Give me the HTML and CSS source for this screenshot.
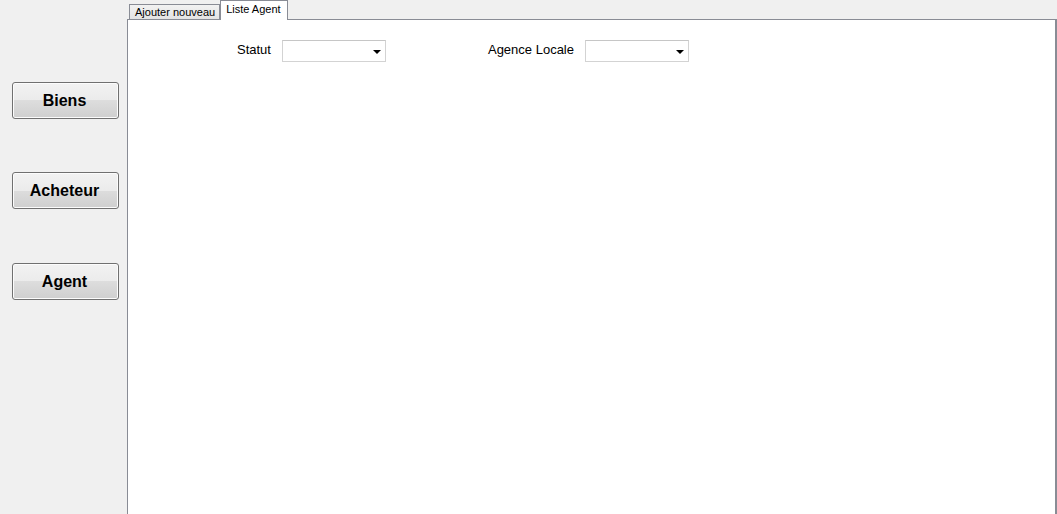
FILE: index.html
```html
<!DOCTYPE html>
<html>
<head>
<meta charset="utf-8">
<link rel="stylesheet" href="styles.css">
</head>
<body>
<div class="app">
  <div class="sidebar">
    <button class="navbtn">Biens</button>
    <button class="navbtn">Acheteur</button>
    <button class="navbtn">Agent</button>
  </div>
  <div class="main">
    <div class="tabs">
      <div class="tab">Ajouter nouveau</div>
      <div class="tab active">Liste Agent</div>
    </div>
    <div class="panel">
      <div class="filters">
        <div class="field statut">
          <span class="label">Statut</span>
          <div class="combo"><span class="arrow"></span></div>
        </div>
        <div class="field agence">
          <span class="label">Agence Locale</span>
          <div class="combo"><span class="arrow"></span></div>
        </div>
      </div>
    </div>
  </div>
</div>
</body>
</html>
```

FILE: styles.css
```css
html, body {
  margin: 0;
  padding: 0;
  height: 100%;
  background: #f0f0f0;
  font-family: "Liberation Sans", Arial, sans-serif;
  overflow: hidden;
}
.app {
  display: flex;
  height: 514px;
}
.sidebar {
  width: 127px;
  flex: none;
  display: flex;
  flex-direction: column;
  padding: 82px 0 0 12px;
  box-sizing: border-box;
  gap: 53px;
}
.navbtn {
  width: 107px;
  height: 37px;
  border: 1px solid #707070;
  border-radius: 3px;
  background: linear-gradient(to bottom, #f2f2f2 0%, #ebebeb 50%, #dddddd 50%, #cfcfcf 100%);
  font-family: "Liberation Sans", Arial, sans-serif;
  font-weight: bold;
  font-size: 16px;
  color: #000;
  padding: 0 2px 0 0;
  box-shadow: inset 0 0 0 1px #fcfcfc;
}
.sidebar .navbtn:nth-child(3) { margin-top: 1px; }
.main {
  width: 930px;
  display: flex;
  flex-direction: column;
}
.tabs {
  display: flex;
  align-items: flex-end;
  height: 19px;
  padding-left: 2px;
  position: relative;
  z-index: 1;
}
.tab {
  height: 15px;
  box-sizing: border-box;
  border: 1px solid #898c95;
  border-bottom: none;
  background: linear-gradient(to bottom, #f2f2f2, #e3e3e3);
  font-size: 11px;
  line-height: 15px;
  padding: 0 4px 0 5px;
  color: #000;
}
.tab.active {
  height: 20px;
  margin-bottom: -1px;
  background: #fff;
  padding: 0 6px 0 5px;
  line-height: 16px;
}
.panel {
  flex: 1;
  background: #fff;
  border: 1px solid #898c95;
  border-bottom: none;
  border-right-width: 2px;
}
.filters {
  display: flex;
  padding-top: 20px;
  padding-left: 109px;
}
.field {
  display: flex;
  align-items: center;
}
.label {
  font-size: 13px;
  color: #000;
  margin-top: -4px;
}
.statut .label { margin-right: 11px; }
.agence { margin-left: 102px; }
.agence .label { margin-right: 11px; }
.combo {
  width: 104px;
  height: 22px;
  box-sizing: border-box;
  border: 1px solid #d3d3d3;
  border-top-color: #c6c6c6;
  background: #fff;
  position: relative;
}
.arrow {
  position: absolute;
  right: 4px;
  top: 9px;
  width: 0;
  height: 0;
  border-left: 4px solid transparent;
  border-right: 4px solid transparent;
  border-top: 4px solid #000;
}
```
